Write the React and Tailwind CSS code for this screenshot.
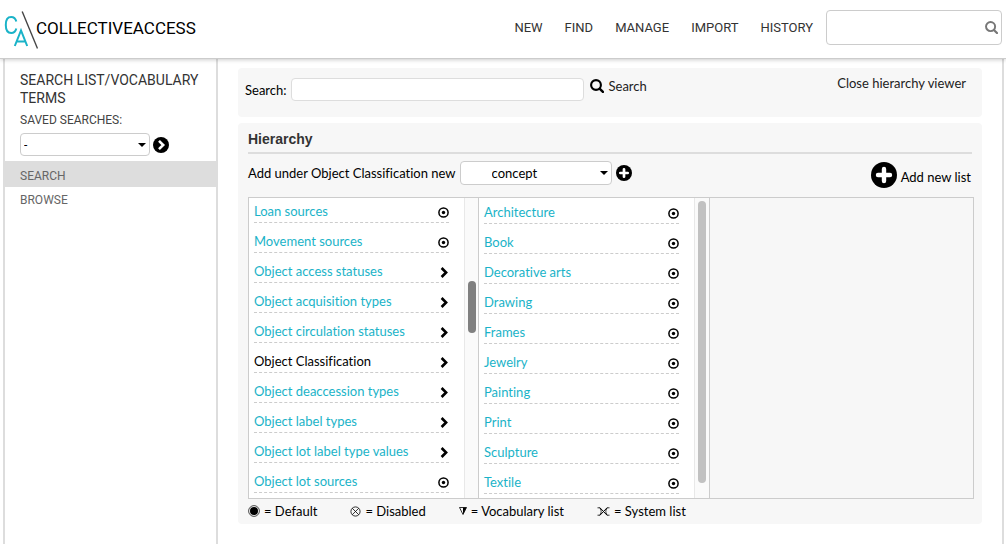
import React from "react";

const lists = [
  ["Loan sources", "dot"],
  ["Movement sources", "dot"],
  ["Object access statuses", "chevron"],
  ["Object acquisition types", "chevron"],
  ["Object circulation statuses", "chevron"],
  ["Object Classification", "chevron"],
  ["Object deaccession types", "chevron"],
  ["Object label types", "chevron"],
  ["Object lot label type values", "chevron"],
  ["Object lot sources", "dot"],
];

const terms = [
  "Architecture",
  "Book",
  "Decorative arts",
  "Drawing",
  "Frames",
  "Jewelry",
  "Painting",
  "Print",
  "Sculpture",
  "Textile",
].map((name) => [name, "dot"]);

function DotIcon() {
  return (
    <svg className="size-[11px]" viewBox="0 0 11 11" aria-hidden="true">
      <circle cx="5.5" cy="5.5" r="4.6" fill="none" stroke="#000" strokeWidth="1.5" />
      <circle cx="5.5" cy="5.5" r="1.7" fill="#000" />
    </svg>
  );
}

function ChevronIcon() {
  return (
    <svg className="h-[11px] w-[9px]" viewBox="0 0 9 11" aria-hidden="true">
      <path d="M1.6 1 L6.1 5.5 L1.6 10" fill="none" stroke="#000" strokeWidth="2.6" />
    </svg>
  );
}

function SearchIcon({ className }) {
  return (
    <svg className={className} viewBox="0 0 14 14" aria-hidden="true">
      <circle cx="6" cy="6" r="4.9" fill="none" stroke="currentColor" strokeWidth="2.1" />
      <path d="M9.6 9.6 L12.9 12.9" stroke="currentColor" strokeWidth="2.4" strokeLinecap="round" />
    </svg>
  );
}

function PlusIcon({ className }) {
  return (
    <svg className={className} viewBox="0 0 26 26" aria-hidden="true">
      <circle cx="13" cy="13" r="13" fill="#000" />
      <path d="M13 7 V19 M7 13 H19" stroke="#fff" strokeWidth="4.4" strokeLinecap="round" />
    </svg>
  );
}

function GoIcon() {
  return (
    <svg className="size-4" viewBox="0 0 16 16" aria-hidden="true">
      <circle cx="8" cy="8" r="8" fill="#000" />
      <path d="M6 3.8 L10.2 8 L6 12.2" fill="none" stroke="#fff" strokeWidth="2.6" />
    </svg>
  );
}

function Caret() {
  return (
    <svg className="pointer-events-none absolute top-1/2 right-1 h-1 w-2 -translate-y-1/2" viewBox="0 0 8 4" aria-hidden="true">
      <path d="M0 0 H8 L4 4 Z" fill="#000" />
    </svg>
  );
}

function Column({ items, current, label, className }) {
  return (
    <ul aria-label={label} className={`min-w-0 flex-1 overflow-hidden pr-[15px] pl-[5px] ${className}`}>
      {items.map(([name, icon]) => (
        <li key={name} className="mb-[5px] flex h-[25px] items-center justify-between border-b border-dashed border-[#ccc]">
          <a href="#" className={name === current ? "pt-px text-black" : "pt-px text-[#1ab3c8]"}>
            {name}
          </a>
          <a href="#" aria-label={`Open ${name}`} className="pt-1">
            {icon === "dot" ? <DotIcon /> : <ChevronIcon />}
          </a>
        </li>
      ))}
    </ul>
  );
}

function Logo() {
  return (
    <a href="#" aria-label="CollectiveAccess" className="flex items-center">
      <svg className="mt-1 h-[39px] w-[34px]" viewBox="0 0 34 39" fill="none" aria-hidden="true">
        <path d="M12.3 11.5 C11.5 8.4 9.6 7 7.2 7 C3.6 7 1.8 9.2 1.8 15 C1.8 20.8 3.6 23 7.2 23 C9.6 23 11.5 21.6 12.3 18.5" stroke="#1ab3c8" strokeWidth="2" />
        <path d="M10.8 36 L17 20.5 L23.2 36 M12.8 31.6 H21.2" stroke="#1ab3c8" strokeWidth="2" />
        <path d="M18.2 1.5 L33.5 38.5" stroke="#444" strokeWidth="1.4" />
      </svg>
      <span className="-ml-0.5 pt-0.5 text-[17px] text-black">COLLECTIVEACCESS</span>
    </a>
  );
}

export default function App() {
  return (
    <div className="flex min-h-screen flex-col bg-white font-['Lato',sans-serif] text-[13px] leading-4 text-black [font-variant-ligatures:none]">
      <header className="relative flex h-[59px] items-center justify-between border-b border-[#ccc] bg-white pr-1 pb-1 pl-1 font-['Roboto',sans-serif] shadow-[0_1px_4px_rgba(0,0,0,0.2)]">
        <Logo />
        <div className="flex items-center">
          <nav className="flex gap-[22px] pt-px pr-[13px] text-[13px] text-[#333]">
            <a href="#">NEW</a>
            <a href="#">FIND</a>
            <a href="#">MANAGE</a>
            <a href="#">IMPORT</a>
            <a href="#">HISTORY</a>
          </nav>
          <form className="relative">
            <input aria-label="Quick search" className="block h-[35px] w-44 rounded border border-[#ccc] bg-white pr-6 pl-2" />
            <button type="button" aria-label="Go" className="absolute top-[11px] right-1 text-[#777]">
              <SearchIcon className="size-[13px]" />
            </button>
          </form>
        </div>
      </header>

      <div className="mr-0.5 ml-[3px] flex flex-1 border-x-2 border-[#ddd]">
        <aside className="w-[213px] shrink-0 border-r-2 border-[#ddd] font-['Roboto',sans-serif]">
          <div className="pr-3 pl-[15px] pt-3">
            <h2 className="text-sm leading-[18px] text-[#333]">SEARCH LIST/VOCABULARY TERMS</h2>
            <label htmlFor="saved" className="mt-1 block text-xs leading-[18px] text-[#444]">
              SAVED SEARCHES:
            </label>
            <div className="mt-1 flex items-center gap-[3px]">
              <div className="relative">
                <select id="saved" className="block h-[23px] w-[130px] appearance-none rounded border border-[#ccc] bg-white pl-[3px] text-xs">
                  <option>-</option>
                </select>
                <Caret />
              </div>
              <button type="button" aria-label="Run saved search">
                <GoIcon />
              </button>
            </div>
          </div>
          <nav className="mt-[5px] text-xs leading-4 text-[#666]">
            <a href="#" className="block bg-[#ddd] px-[15px] pt-[7px] pb-[3px]">SEARCH</a>
            <a href="#" className="block px-[15px] pt-[5px] pb-1">BROWSE</a>
          </nav>
        </aside>

        <main className="min-w-0 flex-1 pt-[9px] pr-5 pl-5">
          <section className="flex h-[49px] items-start justify-between rounded bg-[#f7f7f7] pr-4 pl-[7px]">
            <form className="flex items-start pt-[10px]">
              <label htmlFor="term" className="pt-1">Search:</label>
              <input id="term" className="ml-1 h-[23px] w-[293px] rounded border border-[#ddd] bg-white px-1" />
              <button type="button" className="ml-1.5 flex items-center gap-[5px] text-[#222]">
                <SearchIcon className="size-[14px] text-black" />
                Search
              </button>
            </form>
            <a href="#" className="pt-[7px] text-[#222]">Close hierarchy viewer</a>
          </section>

          <section className="mt-1.5 rounded bg-[#f7f7f7] pr-2 pb-[5px] pl-[10px]">
            <h1 className="mr-0.5 border-b-2 border-[#ddd] pt-1.5 pb-[3px] font-['Liberation_Sans',sans-serif] text-sm font-bold text-[#333]">Hierarchy</h1>
            <div className="flex items-start justify-between">
              <div className="flex items-center pt-[7px]">
                <label htmlFor="type">Add under Object Classification new</label>
                <div className="relative ml-1">
                  <select id="type" className="block h-6 w-[152px] appearance-none rounded border border-[#ccc] bg-white pl-[31px] text-[13px]">
                    <option>concept</option>
                  </select>
                  <Caret />
                </div>
                <button type="button" aria-label="Add concept" className="ml-1">
                  <PlusIcon className="size-4" />
                </button>
              </div>
              <button type="button" className="flex items-center gap-1 pt-2 pr-[3px]">
                <PlusIcon className="size-[26px]" />
                <span className="pt-1">Add new list</span>
              </button>
            </div>

            <div className="mt-[9px] flex h-[302px] border border-[#ccc]">
              <div className="flex w-[230px] border-r border-[#ccc] bg-white">
                <Column items={lists} current="Object Classification" label="Lists" className="pt-0" />
                <div className="w-[14px] border-l border-[#e8e8e8] bg-[#fafafa] px-[3px] pt-[83px]">
                  <div className="h-[52px] w-2 rounded-full bg-[#808080]" />
                </div>
              </div>
              <div className="flex w-[231px] border-r border-[#ccc] bg-white">
                <Column items={terms} label="Terms" className="pt-px" />
                <div className="w-[15px] border-l border-[#e8e8e8] bg-[#fafafa] px-[3px] pt-[3px]">
                  <div className="h-[282px] w-2 rounded-full bg-[#c1c1c1]" />
                </div>
              </div>
            </div>

            <ul className="flex gap-[33px] pt-1">
              <li className="flex items-center gap-1">
                <svg className="size-3" viewBox="0 0 12 12" aria-hidden="true">
                  <circle cx="6" cy="6" r="5.4" fill="none" stroke="#000" strokeWidth="0.7" />
                  <circle cx="6" cy="6" r="4" fill="#000" />
                </svg>
                = Default
              </li>
              <li className="flex items-center gap-1">
                <svg className="size-[11px]" viewBox="0 0 11 11" fill="none" stroke="#000" strokeWidth="0.8" aria-hidden="true">
                  <circle cx="5.5" cy="5.5" r="4.6" />
                  <path d="M2.3 2.3 L8.7 8.7 M8.7 2.3 L2.3 8.7" />
                </svg>
                = Disabled
              </li>
              <li className="flex items-center gap-1">
                <svg className="h-2 w-2" viewBox="0 0 8 8" aria-hidden="true">
                  <path d="M0.5 0.5 H7.5 L4 7.5 Z" fill="none" stroke="#000" strokeWidth="0.8" />
                  <path d="M4 0.5 H7.5 L4 7.5 Z" fill="#000" />
                </svg>
                = Vocabulary list
              </li>
              <li className="flex items-center gap-1">
                <svg className="h-[9px] w-[13px]" viewBox="0 0 13 9" fill="none" stroke="#000" aria-hidden="true">
                  <path d="M0.5 0.8 H3 C3.6 2.6 4.2 3.4 4.2 4.5 C4.2 5.6 3.6 6.4 3 8.2 H0.5 M12.5 0.8 H10 C9.4 2.6 8.8 3.4 8.8 4.5 C8.8 5.6 9.4 6.4 10 8.2 H12.5" strokeWidth="0.8" />
                  <path d="M3 0.8 L10 8.2 M3 8.2 L10 0.8" />
                </svg>
                = System list
              </li>
            </ul>
          </section>
        </main>
      </div>
    </div>
  );
}
